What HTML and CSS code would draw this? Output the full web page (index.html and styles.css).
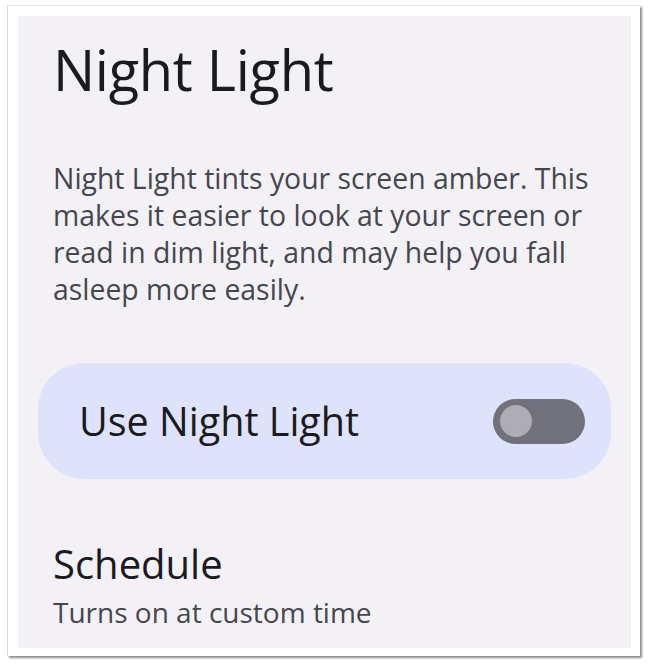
FILE: index.html
```html
<!DOCTYPE html>
<html lang="en">
<head>
<meta charset="utf-8">
<title>Night Light</title>
<link rel="stylesheet" href="styles.css">
</head>
<body>
  <div class="frame">
    <main class="panel">
      <h1 class="title">Night Light</h1>
      <p class="intro">Night Light tints your screen amber. This makes it easier to look at your screen or read in dim light, and may help you fall asleep more easily.</p>
      <div class="main-switch">
        <span class="main-switch-label">Use Night Light</span>
        <span class="toggle" role="switch" aria-checked="false"><span class="toggle-thumb"></span></span>
      </div>
      <div class="pref">
        <div class="pref-title">Schedule</div>
        <div class="pref-summary">Turns on at custom time</div>
      </div>
    </main>
  </div>
</body>
</html>
```
FILE: styles.css
```css
html, body {
  margin: 0;
  padding: 0;
  background: #ffffff;
}

body {
  width: 649px;
  height: 668px;
  padding: 5px 0 0 7px;
  box-sizing: border-box;
  font-family: "Open Sans", "Noto Sans", sans-serif;
}

.frame {
  width: 633px;
  height: 651px;
  box-sizing: border-box;
  padding: 10px 9px 8px 10px;
  background: #ffffff;
  border-top: 1px solid #e6e6e6;
  border-left: 1px solid #dcdcdc;
  box-shadow: 2px 2px 2px rgba(0, 0, 0, 0.45);
}

.panel {
  height: 100%;
  background: #f3f1f6;
  padding: 0 20px 0 20px;
  box-sizing: border-box;
  overflow: hidden;
}

.title {
  margin: 0;
  padding: 15px 0 0 15px;
  font-weight: 400;
  font-size: 56px;
  line-height: 76px;
  color: #1b1b1f;
  letter-spacing: -0.3px;
}

.intro {
  margin: 0;
  padding: 53px 0 0 15px;
  width: 560px;
  box-sizing: border-box;
  font-size: 28.4px;
  line-height: 37px;
  color: #46464f;
}

.main-switch {
  margin-top: 55px;
  height: 116px;
  border-radius: 46px;
  background: #dee3fb;
  display: flex;
  align-items: center;
  justify-content: space-between;
  padding: 0 26px 0 41px;
  box-sizing: border-box;
}

.main-switch-label {
  font-size: 39.5px;
  color: #1b1b1f;
}

.toggle {
  width: 92px;
  height: 45px;
  border-radius: 23px;
  background: #70717a;
  display: flex;
  align-items: center;
  padding-left: 7px;
  box-sizing: border-box;
}

.toggle-thumb {
  width: 32px;
  height: 32px;
  border-radius: 50%;
  background: #aeadb6;
}

.pref {
  padding: 61px 0 0 15px;
}

.pref-title {
  font-size: 40px;
  line-height: 48px;
  color: #1b1b1f;
}

.pref-summary {
  font-size: 28px;
  line-height: 48px;
  color: #46464f;
}
```
